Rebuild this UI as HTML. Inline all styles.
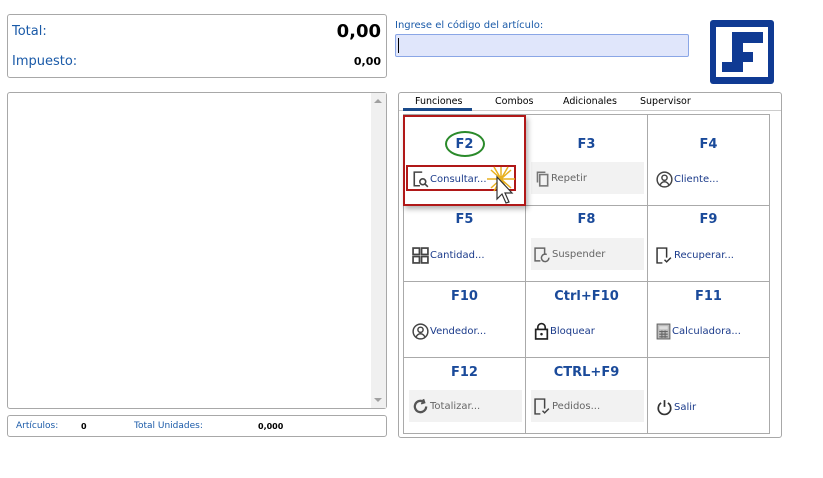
<!DOCTYPE html><html><head><meta charset="utf-8"><style>
*{box-sizing:border-box;margin:0;padding:0}
body{width:823px;height:478px;background:#fff;font-family:"DejaVu Sans","Liberation Sans",sans-serif;position:relative;overflow:hidden}
.a{position:absolute}
.box{position:absolute;border:1px solid #a8a8a8;border-radius:3px;background:#fff}
.blue{color:#1a5aa8}
.cell{position:absolute;border-right:1px solid #aaa;border-bottom:1px solid #aaa;width:122px}
.key{position:absolute;left:0;right:0;text-align:center;font-weight:bold;color:#1a4a9a;font-size:13px}
.btn{position:absolute;left:5px;width:113px;height:32px;font-size:10px;color:#333;display:flex;align-items:center;padding-left:3px}
.btn.g{background:#f2f2f2;color:#666}
.btn.b{color:#1a3a8a}
.btn svg{margin-right:1px;flex:none}
</style></head><body>
<div class="box" style="left:7px;top:14px;width:380px;height:64px">
 <div class="a blue" style="left:4px;top:9px;font-size:13px">Total:</div>
 <div class="a" style="right:5px;top:6px;font-size:18px;font-weight:bold">0,00</div>
 <div class="a blue" style="left:4px;top:39px;font-size:13px">Impuesto:</div>
 <div class="a" style="right:5px;top:40px;font-size:11px;font-weight:bold">0,00</div>
</div>
<div class="box" style="left:7px;top:92px;width:380px;height:317px">
 <div class="a" style="right:0;top:0;width:15px;height:315px;background:#f0f0f0"></div>
 <div class="a" style="right:4px;top:6px;width:0;height:0;border:4px solid transparent;border-bottom-color:#a0a0a0;border-top:0"></div>
 <div class="a" style="right:4px;bottom:6px;width:0;height:0;border:4px solid transparent;border-top-color:#a0a0a0;border-bottom:0"></div>
</div>
<div class="box" style="left:7px;top:415px;width:380px;height:22px;font-size:9px">
 <div class="a blue" style="left:8px;top:5px">Artículos:</div>
 <div class="a" style="left:73px;top:6px;font-weight:bold;font-size:8px">0</div>
 <div class="a blue" style="left:126px;top:5px">Total Unidades:</div>
 <div class="a" style="left:250px;top:6px;font-weight:bold;font-size:8px">0,000</div>
</div>
<div class="a blue" style="left:395px;top:20px;font-size:10px">Ingrese el código del artículo:</div>
<div class="a" style="left:395px;top:34px;width:294px;height:23px;background:#e0e6fb;border:1px solid #8aa6e6;border-radius:2px"><div class="a" style="left:2px;top:3px;width:1px;height:15px;background:#000"></div></div>
<div class="a" style="left:710px;top:20px;width:64px;height:64px;background:#0f3a93;border-radius:3px">
 <div class="a" style="left:6px;top:7px;width:52px;height:50px;background:#fff"></div>
 <div class="a" style="left:22px;top:12px;width:31px;height:11px;background:#0f3a93"></div>
 <div class="a" style="left:22px;top:12px;width:11px;height:40px;background:#0f3a93"></div>
 <div class="a" style="left:22px;top:32px;width:21px;height:10px;background:#0f3a93"></div>
 <div class="a" style="left:12px;top:42px;width:21px;height:10px;background:#0f3a93"></div>
</div>
<div class="box" style="left:398px;top:92px;width:384px;height:346px">
 <div class="a" style="left:0;top:17px;width:382px;height:1px;background:#ccc"></div>
 <div class="a" style="left:16px;top:3px;font-size:9.5px">Funciones</div>
 <div class="a" style="left:4px;top:15px;width:69px;height:3px;background:#1a4a8a"></div>
 <div class="a" style="left:96px;top:3px;font-size:9.5px">Combos</div>
 <div class="a" style="left:164px;top:3px;font-size:9.5px">Adicionales</div>
 <div class="a" style="left:241px;top:3px;font-size:9.5px">Supervisor</div>
</div>
<div class="a" style="left:403px;top:114px;width:367px;height:320px;border-left:1px solid #aaa;border-top:1px solid #aaa">
 <div class="cell" style="left:0;top:0;height:91px"><div class="key" style="top:22px">F2</div><div class="btn b" style="top:48px"><svg width="17" height="17" viewBox="0 0 15 15" fill="none" stroke="#444" stroke-width="1.4"><path d="M9 1H2v12h5"/><circle cx="9.5" cy="9.5" r="2.6"/><path d="M11.5 11.5l2.5 2.5"/></svg>Consultar...</div></div>
 <div class="cell" style="left:122px;top:0;height:91px"><div class="key" style="top:22px">F3</div><div class="btn g" style="top:47px"><svg width="16" height="17" viewBox="0 0 14 15" fill="none" stroke="#777" stroke-width="1.4"><path d="M3 11V2h7"/><rect x="5" y="4" width="7" height="10"/></svg>Repetir</div></div>
 <div class="cell" style="left:244px;top:0;height:91px"><div class="key" style="top:22px">F4</div><div class="btn b" style="top:48px"><svg width="17" height="17" viewBox="0 0 15 15" fill="none" stroke="#444" stroke-width="1.3"><circle cx="7.5" cy="7.5" r="6.5"/><circle cx="7.5" cy="6" r="2.3"/><path d="M3.5 12.5c1-2 2.5-3 4-3s3 1 4 3"/></svg>Cliente...</div></div>
 <div class="cell" style="left:0;top:91px;height:76px"><div class="key" style="top:6px">F5</div><div class="btn b" style="top:33px"><svg width="17" height="17" viewBox="0 0 16 16" fill="none" stroke="#444" stroke-width="1.6"><rect x="1" y="1" width="6" height="6"/><rect x="9" y="1" width="6" height="6"/><rect x="1" y="9" width="6" height="6"/><rect x="9" y="9" width="6" height="6"/></svg>Cantidad...</div></div>
 <div class="cell" style="left:122px;top:91px;height:76px"><div class="key" style="top:6px">F8</div><div class="btn g" style="top:32px"><svg width="17" height="17" viewBox="0 0 16 16" fill="none" stroke="#666" stroke-width="1.4"><path d="M6 14H1V2h9v5"/><path d="M14 11a3.5 3.5 0 1 1-2-3"/></svg>Suspender</div></div>
 <div class="cell" style="left:244px;top:91px;height:76px"><div class="key" style="top:6px">F9</div><div class="btn b" style="top:33px"><svg width="17" height="17" viewBox="0 0 16 16" fill="none" stroke="#333" stroke-width="1.4"><path d="M6 15H1V1h9v9"/><path d="M8 12l2 2 4-4"/></svg>Recuperar...</div></div>
 <div class="cell" style="left:0;top:167px;height:76px"><div class="key" style="top:7px">F10</div><div class="btn b" style="top:33px"><svg width="17" height="17" viewBox="0 0 15 15" fill="none" stroke="#444" stroke-width="1.3"><circle cx="7.5" cy="7.5" r="6.5"/><circle cx="7.5" cy="6" r="2.3"/><path d="M3.5 12.5c1-2 2.5-3 4-3s3 1 4 3"/></svg>Vendedor...</div></div>
 <div class="cell" style="left:122px;top:167px;height:76px"><div class="key" style="top:7px">Ctrl+F10</div><div class="btn b" style="top:33px"><svg width="15" height="18" viewBox="0 0 14 17"><path d="M3.5 7V5a3.5 3.5 0 0 1 7 0v2" fill="none" stroke="#222" stroke-width="1.6"/><rect x="1.5" y="7" width="11" height="9" fill="none" stroke="#222" stroke-width="1.6"/><circle cx="7" cy="11.5" r="1.2" fill="#222"/></svg>Bloquear</div></div>
 <div class="cell" style="left:244px;top:167px;height:76px"><div class="key" style="top:7px">F11</div><div class="btn b" style="top:33px"><svg width="15" height="17" viewBox="0 0 14 16"><rect x="1" y="1" width="12" height="14" fill="#bbb" stroke="#666"/><rect x="3" y="3" width="8" height="3" fill="#ddd"/><path d="M3 8h8M3 10.5h8M3 13h8M5.5 7v7M8.5 7v7" stroke="#666"/></svg>Calculadora...</div></div>
 <div class="cell" style="left:0;top:243px;height:76px"><div class="key" style="top:7px">F12</div><div class="btn g" style="top:32px"><svg width="17" height="17" viewBox="0 0 15 15" fill="none" stroke="#555" stroke-width="2"><path d="M12.5 7.5a5 5 0 1 1-2-4"/><path d="M10 1l1 3-3 1" stroke-width="1.6"/></svg>Totalizar...</div></div>
 <div class="cell" style="left:122px;top:243px;height:76px"><div class="key" style="top:7px">CTRL+F9</div><div class="btn g" style="top:32px"><svg width="17" height="17" viewBox="0 0 16 16" fill="none" stroke="#444" stroke-width="1.4"><path d="M6 15H1V1h9v9"/><path d="M8 12l2 2 4-4"/></svg>Pedidos...</div></div>
 <div class="cell" style="left:244px;top:243px;height:76px"><div class="btn b" style="top:33px"><svg width="17" height="17" viewBox="0 0 15 15" fill="none" stroke="#333" stroke-width="1.5"><path d="M4.5 3.5a5.5 5.5 0 1 0 6 0M7.5 1v6"/></svg>Salir</div></div>
</div>
<div class="a" style="left:403px;top:115px;width:123px;height:91px;border:2px solid #b01818;box-shadow:2px 3px 5px rgba(0,0,0,.3)"></div>
<div class="a" style="left:406px;top:165px;width:110px;height:26px;border:2px solid #b01818"></div>
<div class="a" style="left:445px;top:131px;width:40px;height:26px;border:2px solid #2a8a2a;border-radius:50%"></div>
<svg class="a" style="left:485px;top:165px" width="32" height="42" viewBox="0 0 32 42"><g stroke="#e8b020" stroke-width="1.5"><path d="M2 14h28M16 2v26M6 5l20 18M26 5L6 23M9 2l14 24M23 2L9 26"/></g><path d="M12 12v22l5-5 4 9 3-1-4-9h7z" fill="#fff" stroke="#333" stroke-width="1.2"/></svg>
</body></html>
